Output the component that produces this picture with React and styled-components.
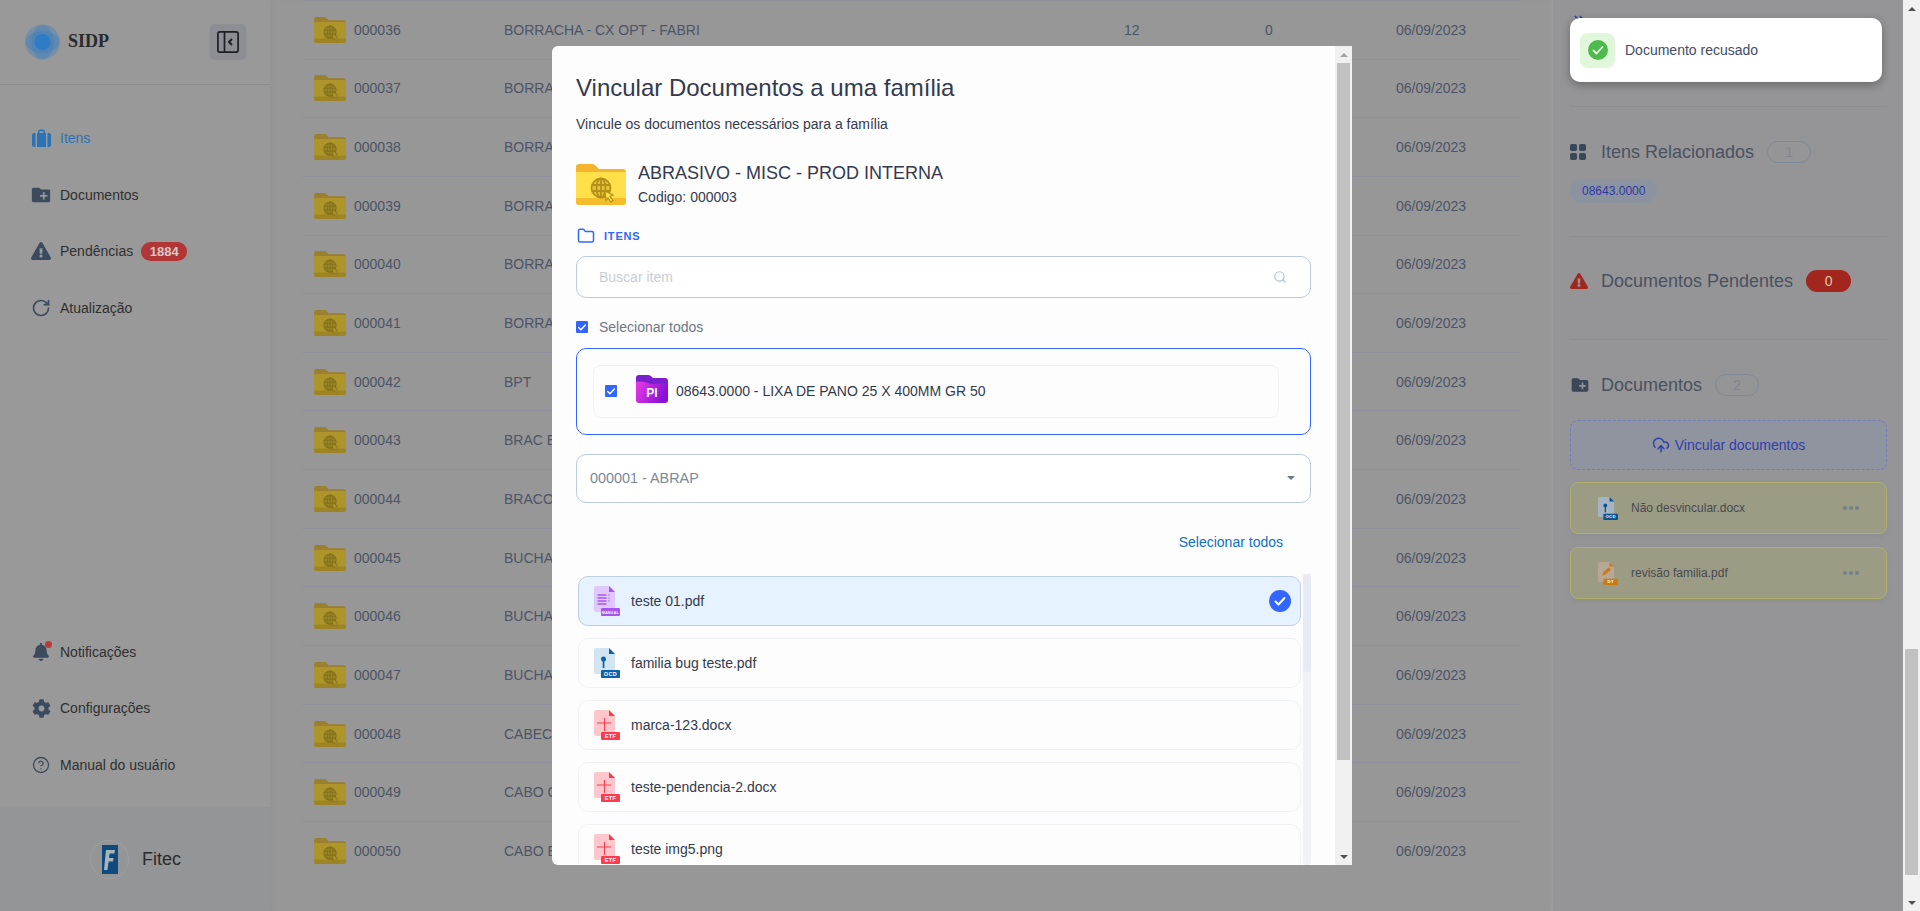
import React from 'react';
import styled, { createGlobalStyle } from 'styled-components';
import { CircleHelp, CloudUpload, Folder, RotateCw, Search } from 'lucide-react';
import { FaBell, FaCog, FaExclamationTriangle } from 'react-icons/fa';
import { MdCreateNewFolder } from 'react-icons/md';

const Global = createGlobalStyle`
  html, body { margin: 0; padding: 0; overflow: hidden; background: #f1f1f1; }
  body, button, input { font-family: "Liberation Sans", Arial, sans-serif; }
  * { box-sizing: border-box; }
`;

const Page = styled.div`
  position: relative; width: 1920px; height: 911px; display: flex; overflow: hidden;
`;
const Sidebar = styled.aside`
  width: 270px; height: 911px; background: #999; display: flex; flex-direction: column; flex: none;
`;
const SideHeader = styled.div`
  height: 85px; flex: none; border-bottom: 1px solid #8c8c8c; display: flex; align-items: center;
  padding: 0 24px 1px 25px;
`;
const Brand = styled.div`
  font-family: "Liberation Serif", serif; font-weight: 700; font-size: 18px; color: #2b2b2b; margin-left: 8px; flex: 1;
`;
const Toggle = styled.div`
  width: 36px; height: 36px; border-radius: 4px; background: #8d8e94; display: flex; align-items: center; justify-content: center;
`;
const Nav = styled.nav`
  display: flex; flex-direction: column; padding-top: 25px;
`;
const BottomNav = styled(Nav)`
  margin-top: auto; padding: 0 0 14px;
`;
const NavItem = styled.div`
  height: 56.6px; display: flex; align-items: center; padding-left: 30px; font-size: 14px;
  color: ${p => (p.$active ? '#2a73b8' : '#303030')};
`;
const NavIcon = styled.span`
  position: relative; width: 22px; height: 22px; margin-right: 8px; display: flex; align-items: center; justify-content: center;
  color: ${p => (p.$active ? '#2a73b8' : '#3c4a5e')};
`;
const BellDot = styled.span`
  position: absolute; top: 0; right: 0; width: 7px; height: 7px; border-radius: 50%; background: #b93a3a;
`;
const CountPill = styled.span`
  margin-left: 8px; height: 19px; min-width: 46px; border-radius: 10px; background: #b23636; color: #d8c9c9;
  font-size: 13px; font-weight: 700; display: flex; align-items: center; justify-content: center;
`;
const SideFooter = styled.div`
  height: 104px; flex: none; background: #949596; display: flex; align-items: center; padding: 0 0 0 90px;
`;
const FooterLogo = styled.div`
  width: 39px; height: 39px; border-radius: 50%; border: 1px solid #9da0a3; display: flex; align-items: center; justify-content: center;
`;
const FooterName = styled.span`
  font-size: 18px; color: #2b2b2b; margin-left: 13px;
`;

const Main = styled.main`
  flex: 1; min-width: 0; height: 911px; background: #979797; padding: 0 29px 0 32px; overflow: hidden;
  box-shadow: inset 5px 0 5px -3px #929292;
`;
const Row = styled.div`
  height: 58.65px; border-top: 1px solid #90909c; padding-left: 12px; display: grid; align-items: center;
  grid-template-columns: 40px 150px 620px 141px 131px 1fr; font-size: 14px; color: #4c5466;
`;
const Cell = styled.span`
  white-space: nowrap; overflow: hidden;
`;

const Panel = styled.aside`
  width: 353px; flex: none; height: 911px; background: #959597; border-left: 3px solid #9a9a9a; padding: 0 16px 0 17px;
`;
const Section = styled.section`
  border-bottom: ${p => (p.$last ? 'none' : '1px solid #8e8e90')};
  padding: ${p => p.$pad};
`;
const Chevrons = styled.div`
  height: 107px; padding: 11px 0 0 4px; color: #2a3aa8; border-bottom: 1px solid #8e8e90;
`;
const Heading = styled.div`
  height: 22px; display: flex; align-items: center; font-size: 18px; color: #4a5160;
`;
const HeadIcon = styled.span`
  width: 31px; flex: none; display: flex; align-items: center; color: ${p => p.$color || '#394759'};
`;
const OutlineBadge = styled.span`
  width: 44px; height: 22px; margin-left: 13px; border-radius: 11px; border: 1px solid #7f8a97; color: #7f8590;
  font-size: 14px; display: flex; align-items: center; justify-content: center;
`;
const RedBadge = styled(OutlineBadge)`
  border: 0; background: #a3261e; color: #ddc9a8; width: 45px;
`;
const Chip = styled.span`
  display: inline-flex; align-items: center; height: 24px; margin-top: 16px; padding: 0 12px; border-radius: 12px;
  background: #8b93a1; color: #2e39a6; font-size: 12px;
`;
const Dashed = styled.div`
  height: 50px; margin-top: 24px; border: 1px dashed #6f7dbf; border-radius: 8px; background: #8f949f; color: #2f3fb0;
  display: flex; align-items: center; justify-content: center; gap: 5px; font-size: 14px;
`;
const DocCard = styled.div`
  height: 52px; margin-top: ${p => p.$gap}px; border: 1px solid #b0b068; border-radius: 8px; background: #9c9c85; padding: 0 27px 0 27px;
  display: flex; align-items: center; gap: 13px; font-size: 12px; color: #48494f;
  box-shadow: 0 3px 5px #8f8f92;
  & > span { flex: 1; }
`;
const Dots = styled.div`
  display: flex; gap: 2px;
  & > i { width: 4px; height: 4px; border-radius: 50%; background: #72808f; }
`;

const PageBar = styled.div`
  width: 17px; flex: none; height: 911px; background: #f1f1f1; display: flex; flex-direction: column; align-items: center;
`;
const ModalBar = styled(PageBar)`
  height: 100%;
`;
const ArrowSlot = styled.div`
  height: 17px; flex: none; display: flex; align-items: center; justify-content: center; margin-top: ${p => (p.$end ? 'auto' : '0')};
  &::before {
    content: ''; border-left: 4px solid transparent; border-right: 4px solid transparent;
    ${p => (p.$down ? 'border-top: 4px solid #505050;' : `border-bottom: 4px solid ${p.$dim ? '#a3a3a3' : '#505050'};`)}
  }
`;
const Thumb = styled.div`
  width: 13px; flex: none; background: #c1c1c1; margin-top: ${p => p.$top}px; height: ${p => p.$height}px;
`;

const Modal = styled.div`
  position: absolute; left: 552px; top: 46px; width: 800px; height: 819px; background: #fdfdfd; display: flex;
  border-radius: 6px 0 0 6px; overflow: hidden;
`;
const ModalBody = styled.div`
  flex: 1; min-width: 0; padding: 28px 24px 0 24px; overflow: hidden;
`;
const Title = styled.h2`
  margin: 0; font-size: 24px; line-height: 28px; font-weight: 400; color: #333a4d;
`;
const Sub = styled.p`
  margin: 12px 0 0; font-size: 14px; line-height: 20px; color: #333a4d; height: 20px;
`;
const FamilyRow = styled.div`
  display: flex; align-items: center; gap: 12px; margin-top: 27px; height: 46px;
`;
const FamilyName = styled.div`
  font-size: 18px; line-height: 25px; color: #333a4d;
`;
const FamilyCode = styled.div`
  font-size: 14px; line-height: 20px; margin-top: 1px; color: #333a4d;
`;
const SectionLabel = styled.div`
  display: flex; align-items: center; gap: 9px; height: 16px; margin-top: 21px; color: #3366ff;
  font-size: 11px; font-weight: 700; letter-spacing: 0.8px; padding-left: 1px;
`;
const SearchField = styled.div`
  height: 42px; margin-top: 12px; border: 1px solid #b9cbdd; border-radius: 10px; background: #fff; padding: 0 23px 1px 22px;
  display: flex; align-items: center; justify-content: space-between; font-size: 14px; color: #c8ced7;
  & > svg { color: #aac4dc; }
`;
const SelectAll = styled.label`
  display: flex; align-items: center; gap: 11px; height: 20px; margin-top: 19px; font-size: 14px; color: #6d7788;
`;
const Check = styled.span`
  width: 12px; height: 12px; flex: none; border-radius: 1px; background: #3366ff; color: #fff; display: flex; align-items: center; justify-content: center;
`;
const ItemsBox = styled.div`
  height: 87px; margin-top: 11px; border: 1px solid #3366ff; border-radius: 10px; padding: 16px 31px 16px 16px;
`;
const ItemCard = styled.div`
  height: 53px; border: 1px solid #f0f1f3; border-radius: 8px; display: flex; align-items: center; padding: 0 0 2px 11px;
  font-size: 14px; color: #333a4d;
`;
const ItemFolder = styled.span`
  display: flex; margin: 0 8px 4px 19px;
`;
const SelectField = styled.div`
  height: 49px; margin-top: 19px; border: 1px solid #b9cbdd; border-radius: 10px; background: #fff; padding: 0 15px 1px 13px;
  display: flex; align-items: center; justify-content: space-between; font-size: 14.4px; color: #7c8797;
  &::after { content: ''; border-left: 4px solid transparent; border-right: 4px solid transparent; border-top: 4px solid #6b7687; }
`;
const LinkRow = styled.div`
  height: 20px; margin-top: 29px; padding-right: 28px; text-align: right; font-size: 14px; line-height: 20px; color: #0d6fc4;
`;
const FileArea = styled.div`
  display: flex; gap: 2px; margin-top: 22px; padding-left: 2px; height: 291px;
`;
const FileList = styled.div`
  flex: 1; min-width: 0; padding-top: 2px; display: flex; flex-direction: column; gap: 12px;
`;
const FileItem = styled.div`
  height: 50px; flex: none; border-radius: 10px; display: flex; align-items: center; gap: 11px; padding: 0 9px 0 15px;
  font-size: 14px; color: #333a4d; border: 1px solid ${p => (p.$on ? '#bccfe3' : '#eff1f6')};
  background: ${p => (p.$on ? '#e6f2ff' : '#fdfdfd')};
  & > span { flex: 1; }
`;
const ListBar = styled.div`
  width: 8px; flex: none; background: #f1f2f6; border-radius: 3px;
  &::before { content: ''; display: block; height: 98px; background: #e8ebf5; border-radius: 3px; }
`;

const Toast = styled.div`
  position: absolute; left: 1570px; top: 18px; width: 312px; height: 64px; background: #fff; border-radius: 10px;
  box-shadow: 0 3px 10px rgba(0,0,0,.3); padding: 15px 10px; display: flex; align-items: center; gap: 10px;
  font-size: 14px; color: #414c66;
`;
const ToastIcon = styled.div`
  width: 35px; height: 35px; border-radius: 8px; background: #e1f7dc; display: flex; align-items: center; justify-content: center;
`;

const FolderGlobe = ({ w = 32, h = 26, dim }) => {
  const c = dim
    ? { tab: '#9a7f2c', top: '#ad9529', bot: '#a38a22', ink: '#86721f', band: '#9d8523' }
    : { tab: '#f4b42c', top: '#ffdf4a', bot: '#fcd43f', ink: '#b39018', band: '#f5bd2c' };
  return (
    <svg width={w} height={h} viewBox="0 0 50 41">
      <path d="M0 3a3 3 0 0 1 3-3h13c2 0 3 1 5 3l2 2h24a3 3 0 0 1 3 3v4H0z" fill={c.tab} />
      <path d="M0 8h50v30a3 3 0 0 1-3 3H3a3 3 0 0 1-3-3z" fill={c.top} />
      <path d="M0 34h50v4a3 3 0 0 1-3 3H3a3 3 0 0 1-3-3z" fill={c.band} />
      <g fill="none" stroke={c.ink} strokeWidth="1.800">
        <circle cx="25" cy="24" r="9.500" fill={c.ink} fillOpacity=".35" />
        <ellipse cx="25" cy="24" rx="4.500" ry="9.500" />
        <path d="M16 21h18M16 27h18M25 14.500v19" />
      </g>
      <path d="M29 27l8 4-3 1.500 3 4-2 1.500-3-4-2 2.500z" fill={c.top} stroke={c.ink} strokeWidth="1.200" />
    </svg>
  );
};

const PiFolder = () => (
  <svg width="32" height="28" viewBox="0 0 32 28">
    <defs>
      <linearGradient id="pi" x1="0" y1="0" x2="1" y2="0.3">
        <stop offset="0" stopColor="#e83ae4" />
        <stop offset="1" stopColor="#8a10d6" />
      </linearGradient>
    </defs>
    <path d="M0 3a3 3 0 0 1 3-3h9c2 0 3 1 5 3h12a3 3 0 0 1 3 3v6H0z" fill="#7a20cf" />
    <path d="M0 7c6-1 10 0 15 2 5 0 12-1 17 0v16a3 3 0 0 1-3 3H3a3 3 0 0 1-3-3z" fill="url(#pi)" />
    <text x="16" y="22" textAnchor="middle" fontSize="12" fontWeight="700" fill="#fff" fontFamily="Liberation Sans">PI</text>
  </svg>
);

const FileIcon = ({ light, dark, label, glyph, w = 26, h = 30, labelSize = 5.500 }) => (
  <svg width={w} height={h} viewBox="0 0 26 30" style={{ flex: 'none' }}>
    <path d="M2 0h13l6 6v18a2 2 0 0 1-2 2H2a2 2 0 0 1-2-2V2a2 2 0 0 1 2-2z" fill={light} />
    <path d="M15 0l6 6h-6z" fill={dark} />
    {glyph === 'lines' && <path d="M4 9h8M4 12h8M4 15h8M4 18h8M15 9v0M15 12v0M15 15v0" stroke={dark} strokeWidth="1.300" strokeLinecap="round" fill="none" />}
    {glyph === 'key' && <g fill={dark}><circle cx="9.500" cy="11" r="2.500" /><rect x="8.700" y="11" width="1.700" height="9" /></g>}
    {glyph === 'plus' && <path d="M3 13h14M10.500 8v13" stroke={dark} strokeWidth="1" fill="none" />}
    {glyph === 'pen' && <path d="M5 18l2-5 7-6 3 3-7 6z" fill={dark} />}
    <rect x="7" y="22" width="19" height="8" rx="1" fill={dark} />
    <text x="16.500" y="28" textAnchor="middle" fontSize={labelSize} fontWeight="700" fill="#fff" letterSpacing=".4" fontFamily="Liberation Sans">{label}</text>
  </svg>
);

const SmallCheck = ({ size = 10 }) => (
  <svg width={size} height={size} viewBox="0 0 12 12">
    <path d="M2 6.500l2.700 2.700L10 3.500" fill="none" stroke="currentColor" strokeWidth="1.700" strokeLinecap="round" strokeLinejoin="round" />
  </svg>
);

const LogoMark = () => (
  <svg width="35" height="36" viewBox="0 0 35 36">
    <g fill="#2a7bc8">
      <circle cx="17.500" cy="18" r="17.500" fillOpacity=".3" />
      <ellipse cx="17.500" cy="18" rx="11" ry="17" fillOpacity=".3" />
      <ellipse cx="17.500" cy="18" rx="17" ry="11" fillOpacity=".3" />
      <circle cx="17.500" cy="18" r="8" fillOpacity=".9" />
    </g>
  </svg>
);

const BagIcon = () => (
  <svg width="19" height="18" viewBox="0 0 19 18" fill="currentColor">
    <path d="M6 4V2.500A2 2 0 0 1 8 .5h3a2 2 0 0 1 2 2V4h1v14H5V4zm1.500 0h4V2.300h-4z" />
    <path d="M3.500 4v14H2a2 2 0 0 1-2-2V6a2 2 0 0 1 2-2zM15.500 4H17a2 2 0 0 1 2 2v10a2 2 0 0 1-2 2h-1.500z" />
  </svg>
);

const ToggleIcon = () => (
  <svg width="22" height="22" viewBox="0 0 22 22" fill="none" stroke="#1f1f22" strokeWidth="1.700">
    <rect x="0.900" y="0.900" width="20.200" height="20.200" rx="2" />
    <path d="M7.500 1v20" />
    <path d="M15 8l-3 3 3 3" strokeWidth="2" />
  </svg>
);

const GridIcon = () => (
  <svg width="16" height="16" viewBox="0 0 16 16" fill="currentColor">
    <rect width="7" height="7" rx="1.800" /><rect x="9" width="7" height="7" rx="1.800" />
    <rect y="9" width="7" height="7" rx="1.800" /><rect x="9" y="9" width="7" height="7" rx="1.800" />
  </svg>
);

const FitecMark = () => (
  <svg width="16" height="29" viewBox="0 0 16 29">
    <rect width="16" height="29" fill="#0f4a7e" />
    <path d="M4 5h9l-.6 3.500H7.600L7 13h4.500l-.5 3.500H6.600L5.500 25H2z" fill="#a9b4bd" />
  </svg>
);

const rows = [
  ['000036', 'BORRACHA - CX OPT - FABRI'], ['000037', 'BORRACHA'], ['000038', 'BORRACHA'], ['000039', 'BORRACHA'],
  ['000040', 'BORRACHA'], ['000041', 'BORRACHA'], ['000042', 'BPT'], ['000043', 'BRAC E'], ['000044', 'BRACO'],
  ['000045', 'BUCHA'], ['000046', 'BUCHA'], ['000047', 'BUCHA'], ['000048', 'CABEC'], ['000049', 'CABO C'], ['000050', 'CABO E'],
];

const etf = { light: '#ffc6cc', dark: '#fb3b4e', label: 'ETF', glyph: 'plus' };
const files = [
  { name: 'teste 01.pdf', on: true, icon: { light: '#e0c8ff', dark: '#a855f0', label: 'MANUAL', glyph: 'lines', labelSize: 3.400 } },
  { name: 'familia bug teste.pdf', icon: { light: '#d2e3f1', dark: '#0b62ac', label: 'OCD', glyph: 'key' } },
  { name: 'marca-123.docx', icon: etf },
  { name: 'teste-pendencia-2.docx', icon: etf },
  { name: 'teste img5.png', icon: etf },
];

export default function App() {
  return (
    <>
      <Global />
      <Page>
        <Sidebar>
          <SideHeader>
            <LogoMark />
            <Brand>SIDP</Brand>
            <Toggle><ToggleIcon /></Toggle>
          </SideHeader>
          <Nav>
            <NavItem $active><NavIcon $active><BagIcon /></NavIcon>Itens</NavItem>
            <NavItem><NavIcon><MdCreateNewFolder size={22} /></NavIcon>Documentos</NavItem>
            <NavItem><NavIcon><FaExclamationTriangle size={20} /></NavIcon>Pendências<CountPill>1884</CountPill></NavItem>
            <NavItem><NavIcon><RotateCw size={20} strokeWidth={2} /></NavIcon>Atualização</NavItem>
          </Nav>
          <BottomNav>
            <NavItem><NavIcon><FaBell size={18} /><BellDot /></NavIcon>Notificações</NavItem>
            <NavItem><NavIcon><FaCog size={19} /></NavIcon>Configurações</NavItem>
            <NavItem><NavIcon><CircleHelp size={18} strokeWidth={1.700} /></NavIcon>Manual do usuário</NavItem>
          </BottomNav>
          <SideFooter>
            <FooterLogo><FitecMark /></FooterLogo>
            <FooterName>Fitec</FooterName>
          </SideFooter>
        </Sidebar>

        <Main>
          {rows.map(([code, name], i) => (
            <Row key={code}>
              <FolderGlobe dim />
              <Cell>{code}</Cell>
              <Cell>{name}</Cell>
              <Cell>{i === 0 ? '12' : ''}</Cell>
              <Cell>{i === 0 ? '0' : ''}</Cell>
              <Cell>06/09/2023</Cell>
            </Row>
          ))}
        </Main>

        <Panel>
          <Chevrons>
            <svg width="12" height="10" viewBox="0 0 12 10" fill="none" stroke="currentColor" strokeWidth="1.600">
              <path d="M1 1l5 6M6 1l5 6" />
            </svg>
          </Chevrons>
          <Section $pad="34px 0 33px">
            <Heading><HeadIcon><GridIcon /></HeadIcon>Itens Relacionados<OutlineBadge>1</OutlineBadge></Heading>
            <Chip>08643.0000</Chip>
          </Section>
          <Section $pad="33px 0 47px">
            <Heading><HeadIcon $color="#a3261e"><FaExclamationTriangle size={18} /></HeadIcon>Documentos Pendentes<RedBadge>0</RedBadge></Heading>
          </Section>
          <Section $last $pad="34px 0 0">
            <Heading><HeadIcon><MdCreateNewFolder size={20} /></HeadIcon>Documentos<OutlineBadge>2</OutlineBadge></Heading>
            <Dashed><CloudUpload size={18} />Vincular documentos</Dashed>
            <DocCard $gap={12}>
              <FileIcon w={20} h={23} light="#a5b4c2" dark="#0f4f8c" label="OCD" glyph="key" />
              <span>Não desvincular.docx</span>
              <Dots><i /><i /><i /></Dots>
            </DocCard>
            <DocCard $gap={13}>
              <FileIcon w={20} h={23} light="#b9a795" dark="#cc7a10" label="DT" glyph="pen" />
              <span>revisão familia.pdf</span>
              <Dots><i /><i /><i /></Dots>
            </DocCard>
          </Section>
        </Panel>

        <PageBar>
          <ArrowSlot />
          <Thumb $top={632} $height={226} />
          <ArrowSlot $end $down />
        </PageBar>

        <Modal>
          <ModalBody>
            <Title>Vincular Documentos a uma família</Title>
            <Sub>Vincule os documentos necessários para a família</Sub>
            <FamilyRow>
              <FolderGlobe w={50} h={41} />
              <div>
                <FamilyName>ABRASIVO - MISC - PROD INTERNA</FamilyName>
                <FamilyCode>Codigo: 000003</FamilyCode>
              </div>
            </FamilyRow>
            <SectionLabel><Folder size={18} strokeWidth={2} />ITENS</SectionLabel>
            <SearchField>Buscar item<Search size={14} /></SearchField>
            <SelectAll><Check><SmallCheck /></Check>Selecionar todos</SelectAll>
            <ItemsBox>
              <ItemCard>
                <Check><SmallCheck /></Check>
                <ItemFolder><PiFolder /></ItemFolder>
                08643.0000 - LIXA DE PANO 25 X 400MM GR 50
              </ItemCard>
            </ItemsBox>
            <SelectField>000001 - ABRAP</SelectField>
            <LinkRow>Selecionar todos</LinkRow>
            <FileArea>
              <FileList>
                {files.map(f => (
                  <FileItem key={f.name} $on={f.on}>
                    <FileIcon {...f.icon} />
                    <span>{f.name}</span>
                    {f.on && (
                      <svg width="22" height="22" viewBox="0 0 22 22">
                        <circle cx="11" cy="11" r="11" fill="#3366ff" />
                        <path d="M6.500 11.500l3 3 6-6.500" fill="none" stroke="#fff" strokeWidth="2" strokeLinecap="round" strokeLinejoin="round" />
                      </svg>
                    )}
                  </FileItem>
                ))}
              </FileList>
              <ListBar />
            </FileArea>
          </ModalBody>
          <ModalBar>
            <ArrowSlot $dim />
            <Thumb $top={0} $height={697} />
            <ArrowSlot $end $down />
          </ModalBar>
        </Modal>

        <Toast>
          <ToastIcon>
            <svg width="20" height="20" viewBox="0 0 20 20">
              <circle cx="10" cy="10" r="10" fill="#4cbb4c" />
              <path d="M5.500 10.500l3 3 6-6.500" fill="none" stroke="#e9f8e6" strokeWidth="1.800" strokeLinecap="round" strokeLinejoin="round" />
            </svg>
          </ToastIcon>
          Documento recusado
        </Toast>
      </Page>
    </>
  );
}
